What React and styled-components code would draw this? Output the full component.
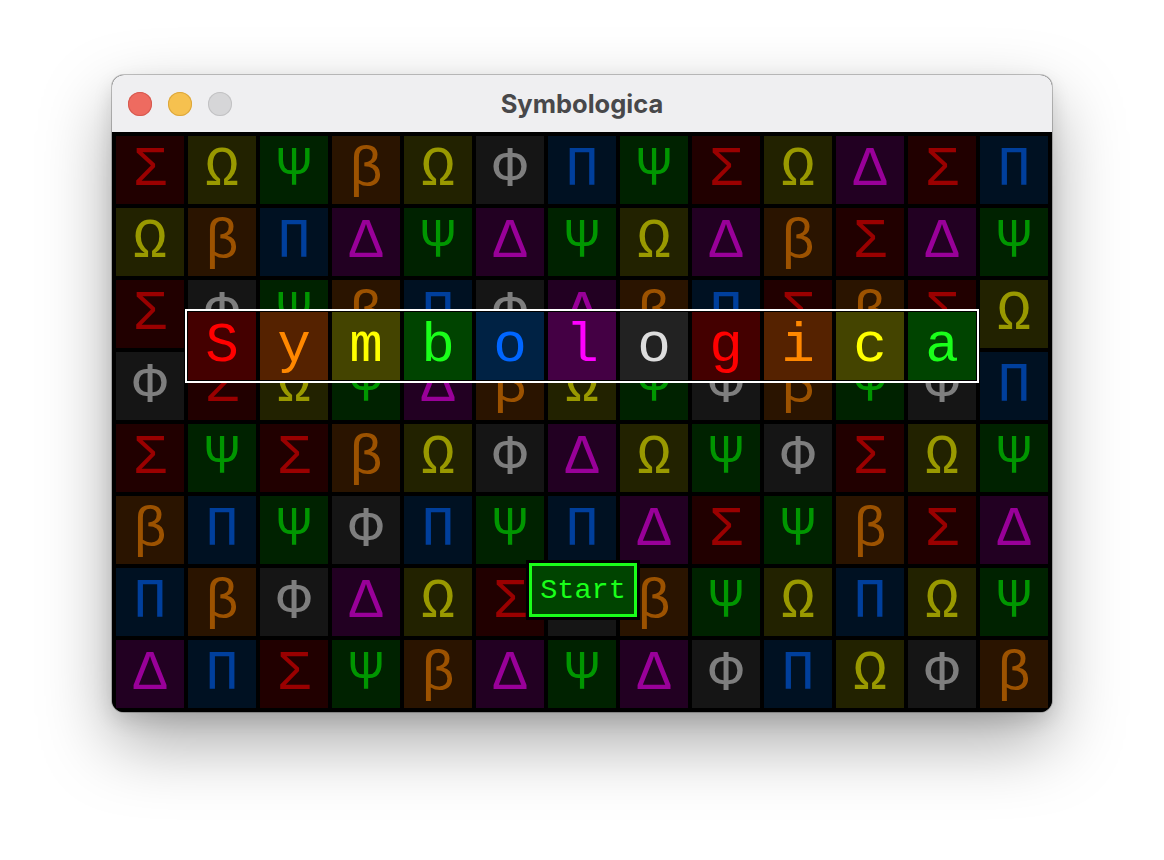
import React from "react";
import styled, { createGlobalStyle } from "styled-components";

const GlobalStyle = createGlobalStyle`
  html, body {
    margin: 0;
    padding: 0;
    background: #ffffff;
  }
`;

const SYMBOLS = {
  "Σ": { bg: "#210000", fg: "#9a0000" },
  "Ω": { bg: "#222200", fg: "#999900" },
  "Ψ": { bg: "#002200", fg: "#009600" },
  "β": { bg: "#2a1400", fg: "#9c5200" },
  "Φ": { bg: "#151515", fg: "#7e7e7e" },
  "Π": { bg: "#001122", fg: "#003f9c" },
  "Δ": { bg: "#220022", fg: "#990099" },
};

const ROWS = [
  "ΣΩΨβΩΦΠΨΣΩΔΣΠ",
  "ΩβΠΔΨΔΨΩΔβΣΔΨ",
  "ΣΦΨβΠΦΔβΠΣβΣΩ",
  "ΦΣΩΨΔβΩΨΦβΨΦΠ",
  "ΣΨΣβΩΦΔΩΨΦΣΩΨ",
  "βΠΨΦΠΨΠΔΣΨβΣΔ",
  "ΠβΦΔΩΣΦβΨΩΠΩΨ",
  "ΔΠΣΨβΔΨΔΦΠΩΦβ",
];

const LETTERS = [
  { ch: "S", bg: "#440000", fg: "#ff0000" },
  { ch: "y", bg: "#552200", fg: "#ff8800" },
  { ch: "m", bg: "#444400", fg: "#ffff00" },
  { ch: "b", bg: "#004400", fg: "#1aff1a" },
  { ch: "o", bg: "#002244", fg: "#0066ff" },
  { ch: "l", bg: "#440044", fg: "#ff00ff" },
  { ch: "o", bg: "#222222", fg: "#dddddd" },
  { ch: "g", bg: "#440000", fg: "#ff0000" },
  { ch: "i", bg: "#552200", fg: "#ff8800" },
  { ch: "c", bg: "#444400", fg: "#ffff00" },
  { ch: "a", bg: "#004400", fg: "#1aff1a" },
];

const Page = styled.div`
  height: 860px;
  padding-top: 75px;
  box-sizing: border-box;
  display: flex;
  justify-content: center;
  align-items: flex-start;
`;

const Window = styled.div`
  width: 940px;
  border-radius: 12px;
  overflow: hidden;
  background: #000;
  box-shadow: 0 0 0 1px rgba(0, 0, 0, 0.22), 0 30px 70px rgba(0, 0, 0, 0.34),
    0 8px 20px rgba(0, 0, 0, 0.12);
`;

const TitleBar = styled.div`
  height: 57px;
  background: #efeff1;
  display: grid;
  grid-template-columns: 1fr auto 1fr;
  align-items: center;
`;

const Lights = styled.div`
  display: flex;
  gap: 16px;
  padding-left: 16px;
`;

const Light = styled.span`
  width: 24px;
  height: 24px;
  border-radius: 50%;
  background: ${(p) => p.$color};
  box-shadow: inset 0 0 0 1px ${(p) => p.$edge};
`;

const Title = styled.div`
  font-family: Inter, "Liberation Sans", sans-serif;
  font-weight: 700;
  font-size: 25.5px;
  color: #48484a;
`;

const Board = styled.div`
  position: relative;
  background: #000;
  padding: 4px;
  display: grid;
  grid-template-columns: repeat(13, 68px);
  grid-auto-rows: 68px;
  gap: 4px;
`;

const Tile = styled.div`
  display: flex;
  align-items: center;
  justify-content: center;
  background: ${(p) => p.$bg};
  color: ${(p) => p.$fg};
  font-family: "Courier New", "Liberation Mono", monospace;
  font-size: 56px;
  line-height: 1;
`;

const Banner = styled.div`
  position: absolute;
  left: 73px;
  top: 177px;
  display: flex;
  gap: 4px;
  padding: 1px;
  background: #000;
  border: 2px solid #ffffff;
`;

const LetterTile = styled(Tile)`
  width: 68px;
  height: 68px;
`;

const StartButton = styled.button`
  position: absolute;
  left: 417px;
  top: 431px;
  width: 108px;
  height: 54px;
  box-sizing: border-box;
  padding: 0;
  background: #004400;
  border: 3px solid #1aff1a;
  outline: 3px solid #000;
  color: #1aff1a;
  font-family: "Courier New", "Liberation Mono", monospace;
  font-size: 28.5px;
  cursor: pointer;
`;

export default function App() {
  return (
    <Page>
      <GlobalStyle />
      <Window>
        <TitleBar>
          <Lights>
            <Light $color="#ee6b60" $edge="#d55a50" />
            <Light $color="#f6c14f" $edge="#dca73c" />
            <Light $color="#d6d6d8" $edge="#c2c2c4" />
          </Lights>
          <Title>Symbologica</Title>
          <div />
        </TitleBar>
        <Board>
          {ROWS.flatMap((row, r) =>
            Array.from(row).map((s, c) => (
              <Tile key={`${r}-${c}`} $bg={SYMBOLS[s].bg} $fg={SYMBOLS[s].fg}>
                {s}
              </Tile>
            ))
          )}
          <Banner>
            {LETTERS.map((l, i) => (
              <LetterTile key={i} $bg={l.bg} $fg={l.fg}>
                {l.ch}
              </LetterTile>
            ))}
          </Banner>
          <StartButton>Start</StartButton>
        </Board>
      </Window>
    </Page>
  );
}
